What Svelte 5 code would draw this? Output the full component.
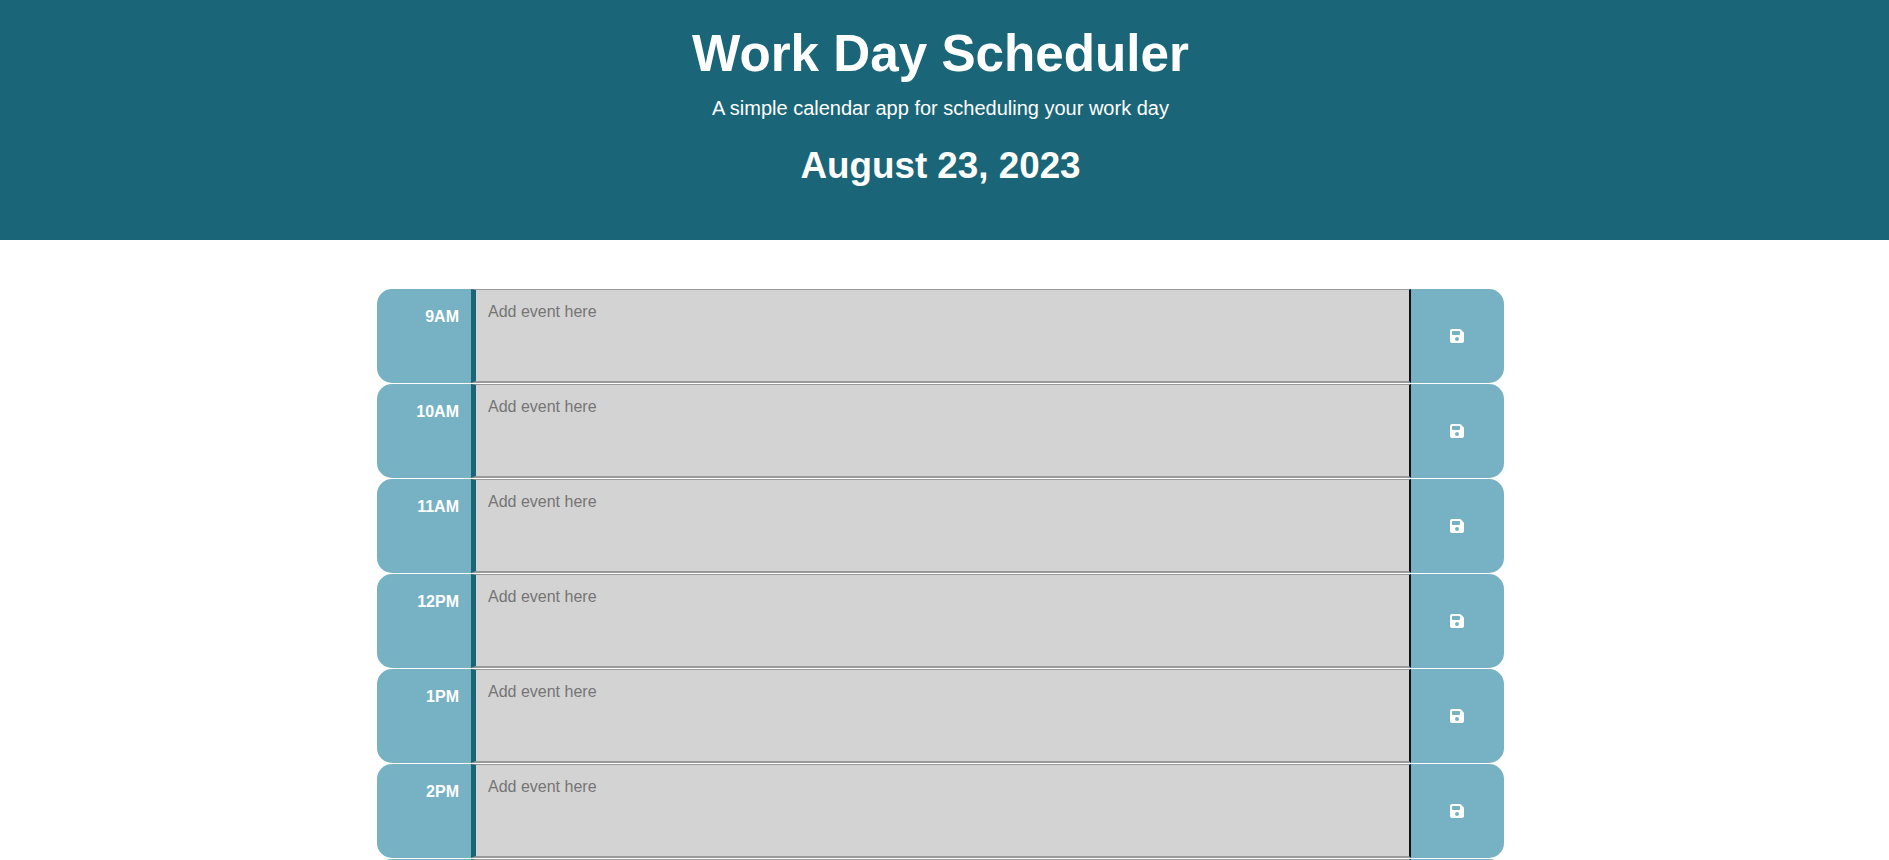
<script lang="ts">
    const hours = ['9AM', '10AM', '11AM', '12PM', '1PM', '2PM', '3PM'];
</script>

<header class="jumbotron">
    <div class="heading">
        <h1>Work Day Scheduler</h1>
        <p class="lead">A simple calendar app for scheduling your work day</p>
        <p class="today">August 23, 2023</p>
    </div>
</header>

<main class="container">
    {#each hours as hour}
        <div class="time-block">
            <div class="hour">{hour}</div>
            <textarea class="description" placeholder="Add event here"></textarea>
            <button class="save-btn" aria-label="save">
                <svg viewBox="0 0 448 512" width="14" height="16">
                    <path fill="currentColor" d="M64 32C28.7 32 0 60.7 0 96V416c0 35.3 28.7 64 64 64H384c35.3 0 64-28.7 64-64V173.3c0-17-6.7-33.3-18.7-45.3L352 50.7C340 38.7 323.7 32 306.7 32H64zm0 96c0-17.7 14.3-32 32-32H288c17.7 0 32 14.3 32 32v64c0 17.7-14.3 32-32 32H96c-17.7 0-32-14.3-32-32V128zM224 288a64 64 0 1 1 0 128 64 64 0 1 1 0-128z"/>
                </svg>
            </button>
        </div>
    {/each}
</main>

<style>
    :global(body) {
        margin: 0;
        background: #fff;
        font-family: "Liberation Sans", Arial, sans-serif;
    }

    .jumbotron {
        box-sizing: border-box;
        height: 240px;
        padding: 22px 8px 0 0;
        background: #1a6678;
        color: #fff;
        text-align: center;
    }

    h1 {
        margin: 0;
        font-size: 51.2px;
        font-weight: 700;
        line-height: 64px;
    }

    .lead {
        margin: 7px 0 0;
        font-size: 20px;
        line-height: 30px;
    }

    .today {
        margin: 22px 0 0;
        font-size: 36.8px;
        font-weight: 700;
        line-height: 42px;
    }

    .container {
        width: 1127px;
        margin: 49px 0 0 377px;
    }

    .time-block {
        display: flex;
        height: 94px;
        margin-bottom: 1px;
    }

    .hour {
        box-sizing: border-box;
        flex: 0 0 94px;
        padding: 18px 12px 0 0;
        border-radius: 15px 0 0 15px;
        background: #77b2c4;
        color: #fff;
        font-size: 16px;
        font-weight: 700;
        line-height: 20px;
        text-align: right;
    }

    .description {
        box-sizing: border-box;
        flex: 1;
        height: 94px;
        margin: 0;
        padding: 12px 10px 10px 12px;
        border-width: 1px 2px 2px 5px;
        border-style: solid;
        border-color: #999 #111 #999 #1a6678;
        border-radius: 0;
        background: #d3d3d3;
        font-family: inherit;
        font-size: 16px;
        line-height: 20px;
        resize: none;
        outline: none;
    }

    .description::placeholder {
        color: #757575;
    }

    .save-btn {
        flex: 0 0 93px;
        display: flex;
        align-items: center;
        justify-content: center;
        padding: 0 2px 0 0;
        border: none;
        border-radius: 0 15px 15px 0;
        background: #77b2c4;
        color: #fff;
    }
</style>
